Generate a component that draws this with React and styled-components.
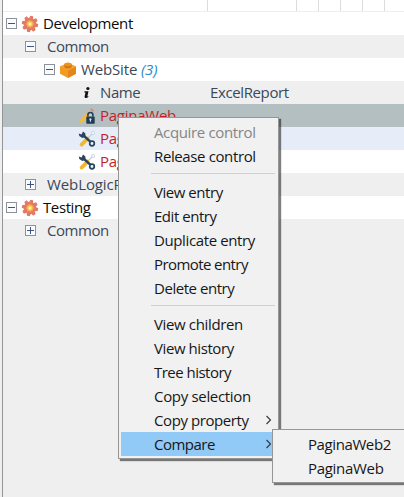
import React from "react";
import styled, { createGlobalStyle } from "styled-components";

const Global = createGlobalStyle`
  *, *::before, *::after { box-sizing: border-box; }
  body { margin: 0; overflow: hidden; font-family: "Open Sans", "Noto Sans", sans-serif; font-size: 15px; }
`;

const Page = styled.div`
  position: relative;
  width: 404px;
  height: 497px;
  overflow: hidden;
  background: #efefef;
`;

const Tree = styled.div`
  height: 100%;
  margin-left: 2px;
  border-left: 1px solid #929497;
`;

const Header = styled.div`
  display: grid;
  grid-template-columns: 205px 89px 22px 22px 22px 22px 1fr;
  height: 12px;
  background: #fff;
  border-bottom: 1px solid #ededed;
`;

const HeaderCell = styled.div`
  border-right: 1px solid #dcdcdc;
  &:last-child { border-right: 0; }
`;

const Row = styled.div`
  display: flex;
  align-items: center;
  height: 23px;
  padding-left: ${(p) => p.$indent}px;
  background: ${(p) => p.$bg};
`;

const Toggle = styled.svg`
  flex: none;
  width: 11px;
  height: 11px;
  margin-right: ${(p) => p.$gap}px;
`;

const Icon = styled.svg`
  flex: none;
  width: 18px;
  height: 18px;
  margin-right: 4px;
`;

const Label = styled.span`
  flex: none;
  width: ${(p) => (p.$width ? p.$width + "px" : "auto")};
  line-height: 23px;
  white-space: nowrap;
  color: ${(p) => p.$color || "#3b4858"};
  letter-spacing: ${(p) => p.$ls ?? -0.25}px;
`;

const Count = styled.i`
  color: #268bcb;
`;

const Menu = styled.div`
  position: absolute;
  left: ${(p) => p.$x}px;
  top: ${(p) => p.$y}px;
  width: ${(p) => p.$w}px;
  padding: 2px;
  background: #f1f1f1;
  border: 1px solid #969696;
  box-shadow: 2px 2px 1px rgba(0, 0, 0, 0.5);
`;

const MenuItem = styled.div`
  display: flex;
  align-items: center;
  justify-content: space-between;
  height: 24px;
  padding: 0 4px 0 33px;
  line-height: 24px;
  white-space: nowrap;
  letter-spacing: ${(p) => p.$ls ?? -0.4}px;
  color: ${(p) => (p.$disabled ? "#858585" : "#171717")};
  background: ${(p) => (p.$active ? "#91c9f7" : "transparent")};
`;

const Separator = styled.div`
  height: 12px;
  padding: 5px 1px 0 30px;
  &::before { content: ""; display: block; height: 1px; background: #d0d0d0; }
`;

const Chevron = styled.svg`
  width: 7px;
  height: 10px;
`;

const Expander = ({ open, gap }) => (
  <Toggle viewBox="0 0 11 11" $gap={gap}>
    <rect x="0.5" y="0.5" width="10" height="10" fill="#fafbfc" stroke="#8b929b" />
    <path d={open ? "M2 5.5h7" : "M2 5.5h7M5.5 2v7"} stroke="#3d5482" />
  </Toggle>
);

const Gear = () => (
  <Icon viewBox="0 0 18 18">
    <g fill="#e27a68">
      {[0, 45, 90, 135].map((a) => (
        <path key={a} d="M7.6 .8h2.8l.8 3v10.4l-.8 3H7.6l-.8-3V3.8z" transform={`rotate(${a + 12} 9 9)`} />
      ))}
      <circle cx="9" cy="9" r="5.6" />
    </g>
    <circle cx="9" cy="9" r="3.3" fill="#f9c84c" stroke="#f3a04f" />
    <circle cx="9" cy="9" r="1.5" fill="#fff0a8" />
  </Icon>
);

const Brick = () => (
  <Icon viewBox="0 0 18 18">
    <path d="M1 5.5 9 2l8 3.5v7.2L9 17l-8-4.3z" fill="#f29a22" />
    <path d="M9 9.5 17 5.5v7.2L9 17z" fill="#e4861b" />
    <path d="M1 5.5 9 2l8 3.5-8 4z" fill="#f6a52f" />
    <path d="M5.3 3.3v3c1.5 1.7 5.9 1.7 7.4 0v-3z" fill="#d7780f" />
    <ellipse cx="9" cy="3.2" rx="3.7" ry="1.8" fill="#eb9426" />
  </Icon>
);

const Info = () => (
  <Icon viewBox="0 0 18 18">
    <circle cx="9.9" cy="4.5" r="1.6" fill="#111" />
    <path d="M6.5 7.2h4L9.3 12.4l1.2-.5-.3 1.2c-1.2 1.2-3.9 1.4-3.6-.6l.9-4H6.3z" fill="#111" />
  </Icon>
);

const LockedPencil = () => (
  <Icon viewBox="0 0 18 18">
    <path d="m1.2 16 1-3.6L11 3.6l2.8 2.8L5 15z" fill="#f6ba3f" />
    <path d="m12 2.2 1.4-1.2 2.7 2.7-1.4 1.3z" fill="#ed8474" />
    <path d="M9.9 9.6V8a2.5 2.5 0 0 1 5 0v1.6" fill="#c5cdd0" stroke="#263f58" strokeWidth="1.6" />
    <rect x="8.3" y="9.4" width="8.4" height="7.4" rx="0.7" fill="#203b55" />
    <circle cx="12.4" cy="12.4" r="1.1" fill="#dce7ed" />
    <path d="M12.4 12.6v2.2" stroke="#dce7ed" />
  </Icon>
);

const Tools = () => (
  <Icon viewBox="0 0 18 18">
    <path d="M14.2 3.8 10.6 7.4" stroke="#b9ccdc" strokeWidth="1.1" />
    <circle cx="15" cy="3" r="1.7" fill="#edf4f9" stroke="#b9ccdc" strokeWidth="0.6" />
    <path d="m9.6 8.6-6 6" stroke="#f3b72f" strokeWidth="3.8" strokeLinecap="round" />
    <path d="m5.5 5.5 7 6.4" stroke="#29445c" strokeWidth="2.4" />
    <path d="M.8 3.5 3.6 4.5 5 1.6l2.4 1.8v3.4L4.3 8 1.3 6z" fill="#29445c" />
    <circle cx="14" cy="13.5" r="2.3" fill="#eef3f8" stroke="#29445c" strokeWidth="1.7" />
  </Icon>
);

const Arrow = () => (
  <Chevron viewBox="0 0 7 10">
    <path d="m1.5 1 4 4-4 4" fill="none" stroke="#363636" strokeWidth="1.1" />
  </Chevron>
);

const TREE = [
  { text: "Development", indent: 3, bg: "#fff", open: true, gap: 4, icon: Gear, color: "#0c0c0c", ls: -0.38 },
  { text: "Common", indent: 22, bg: "#efefef", open: true, gap: 11, ls: -0.45 },
  { text: "WebSite", count: "(3)", indent: 41, bg: "#fff", open: true, gap: 4, icon: Brick, ls: -0.15 },
  { text: "Name", value: "ExcelReport", indent: 75, bg: "#efefef", icon: Info, ls: -0.4 },
  { text: "PaginaWeb", indent: 75, bg: "#b3bfc0", icon: LockedPencil, color: "#c31f2b" },
  { text: "PaginaWeb2", indent: 75, bg: "#e7edf8", icon: Tools, color: "#c31f2b" },
  { text: "PaginaWeb3", indent: 75, bg: "#fff", icon: Tools, color: "#c31f2b" },
  { text: "WebLogicPool", indent: 22, bg: "#efefef", open: false, gap: 11, ls: -0.1 },
  { text: "Testing", indent: 3, bg: "#fff", open: true, gap: 4, icon: Gear, color: "#0c0c0c", ls: -0.4 },
  { text: "Common", indent: 22, bg: "#efefef", open: false, gap: 11, ls: -0.45 },
];

const MENU = [
  { text: "Acquire control", disabled: true, ls: -0.36 },
  { text: "Release control", ls: -0.38 },
  null,
  { text: "View entry", ls: -0.46 },
  { text: "Edit entry", ls: -0.46 },
  { text: "Duplicate entry", ls: -0.38 },
  { text: "Promote entry", ls: -0.58 },
  { text: "Delete entry", ls: -0.46 },
  null,
  { text: "View children", ls: -0.36 },
  { text: "View history", ls: -0.42 },
  { text: "Tree history", ls: -0.52 },
  { text: "Copy selection", ls: -0.32 },
  { text: "Copy property", more: true, ls: -0.42 },
  { text: "Compare", more: true, active: true, ls: -0.5 },
];

export default function App() {
  return (
    <Page>
      <Global />
      <Tree>
        <Header>
          {[0, 1, 2, 3, 4, 5, 6].map((i) => (
            <HeaderCell key={i} />
          ))}
        </Header>
        {TREE.map(({ icon: Glyph, ...r }, i) => (
          <Row key={i} $indent={r.indent} $bg={r.bg}>
            {r.open !== undefined && <Expander open={r.open} gap={r.gap} />}
            {Glyph && <Glyph />}
            <Label $color={r.color} $ls={r.ls} $width={r.value && 110}>
              {r.text}
              {r.count && <Count> {r.count}</Count>}
            </Label>
            {r.value && <Label $ls={-0.38}>{r.value}</Label>}
          </Row>
        ))}
      </Tree>
      <Menu $x={118} $y={117} $w={161}>
        {MENU.map((m, i) =>
          m ? (
            <MenuItem key={i} $disabled={m.disabled} $active={m.active} $ls={m.ls}>
              {m.text}
              {m.more && <Arrow />}
            </MenuItem>
          ) : (
            <Separator key={i} />
          )
        )}
      </Menu>
      <Menu $x={272} $y={429} $w={150}>
        <MenuItem>PaginaWeb2</MenuItem>
        <MenuItem $ls={-0.3}>PaginaWeb</MenuItem>
      </Menu>
    </Page>
  );
}
